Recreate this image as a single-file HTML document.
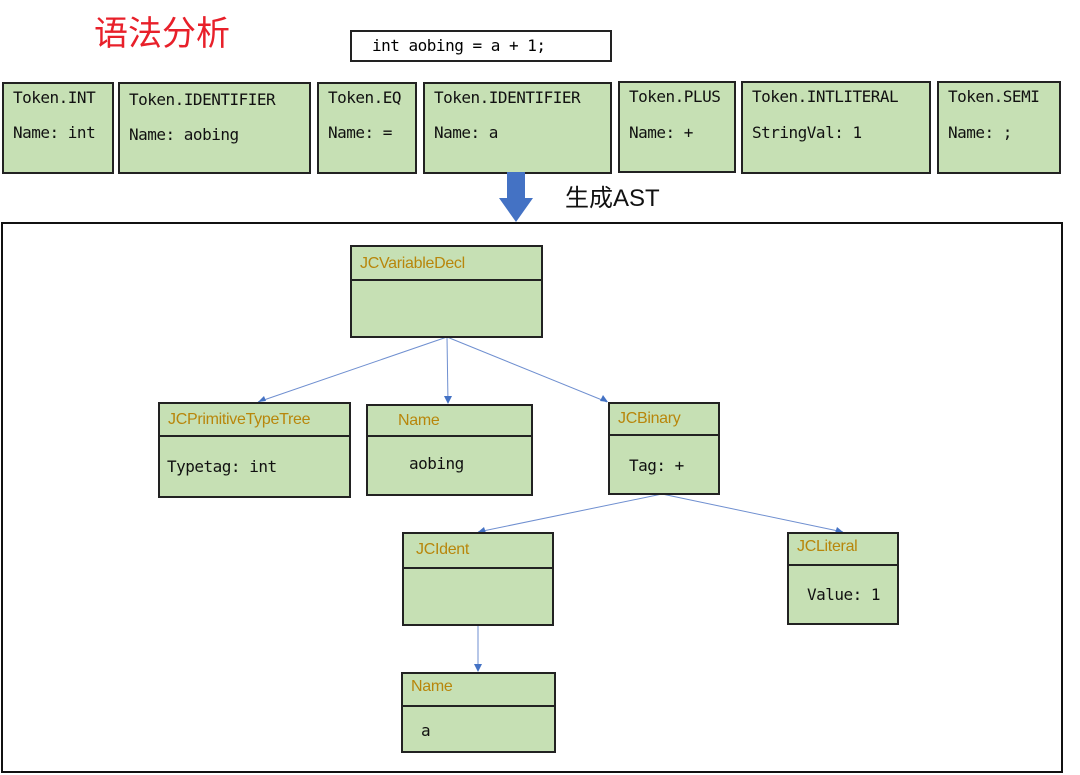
<!DOCTYPE html>
<html><head><meta charset="utf-8"><style>
body{margin:0;width:1080px;height:775px;background:#fff;position:relative;overflow:hidden;font-family:"DejaVu Sans Mono","Liberation Mono",monospace;}
.a{position:absolute;box-sizing:border-box;}
.t{background:#c6e0b4;border:2px solid #222;font-size:16px;color:#111;}
.t span{position:absolute;left:9px;white-space:nowrap;letter-spacing:-0.5px}
.n{background:#c6e0b4;border:2px solid #222;}
.n .h{position:absolute;left:0;right:0;top:0;border-bottom:2px solid #222;color:#b8860b;font-family:"Liberation Sans",sans-serif;font-size:16px;padding-left:8px;box-sizing:border-box;letter-spacing:-0.3px}
.n .b{position:absolute;font-size:16px;color:#111;white-space:nowrap;letter-spacing:-0.5px}
</style></head><body>
<div class="a" style="left:94px;top:6px;font:34px 'Noto Sans CJK SC',sans-serif;color:#e8202a;">语法分析</div>
<div class="a" style="left:350px;top:30px;width:262px;height:32px;border:2px solid #222;font-size:16px;padding:4px 0 0 20px;letter-spacing:-0.5px">int aobing = a + 1;</div>

<div class="a t" style="left:2px;top:82px;width:112px;height:92px"><span style="top:4px">Token.INT</span><span style="top:39px">Name: int</span></div>
<div class="a t" style="left:118px;top:82px;width:193px;height:92px"><span style="top:6px">Token.IDENTIFIER</span><span style="top:41px">Name: aobing</span></div>
<div class="a t" style="left:317px;top:82px;width:100px;height:92px"><span style="top:4px">Token.EQ</span><span style="top:39px">Name: =</span></div>
<div class="a t" style="left:423px;top:82px;width:189px;height:92px"><span style="top:4px">Token.IDENTIFIER</span><span style="top:39px">Name: a</span></div>
<div class="a t" style="left:618px;top:81px;width:118px;height:92px"><span style="top:4px">Token.PLUS</span><span style="top:40px">Name: +</span></div>
<div class="a t" style="left:741px;top:81px;width:190px;height:93px"><span style="top:4px">Token.INTLITERAL</span><span style="top:40px">StringVal: 1</span></div>
<div class="a t" style="left:937px;top:81px;width:124px;height:93px"><span style="top:4px">Token.SEMI</span><span style="top:40px">Name: ;</span></div>

<svg class="a" style="left:0;top:0" width="1080" height="775">
<polygon points="507,172 525,172 525,198 533,198 516,222 499,198 507,198" fill="#4472c4"/>
<g stroke="#6f8fd0" stroke-width="1" fill="none">
<line x1="447" y1="337" x2="258" y2="402"/><line x1="447" y1="337" x2="448" y2="403"/><line x1="447" y1="337" x2="607" y2="402"/>
<line x1="662" y1="494" x2="478" y2="532"/><line x1="662" y1="494" x2="843" y2="532"/><line x1="478" y1="625" x2="478" y2="671"/>
</g>
<g fill="#4472c4">
<polygon points="258,402 264,396 266,401"/><polygon points="448,404 444,396 452,396"/><polygon points="608,402 600,401 603,395"/>
<polygon points="478,532 484,527 486,533"/><polygon points="843,532 835,533 837,527"/><polygon points="478,672 474,664 482,664"/>
</g>
</svg>
<div class="a" style="left:565px;top:178px;font:24px 'Liberation Sans','Noto Sans CJK SC',sans-serif;color:#111">生成AST</div>

<div class="a" style="left:1px;top:222px;width:1062px;height:551px;border:2px solid #111"></div>

<div class="a n" style="left:350px;top:245px;width:193px;height:93px"><div class="h" style="height:34px;padding-top:8px">JCVariableDecl</div></div>
<div class="a n" style="left:158px;top:402px;width:193px;height:96px"><div class="h" style="height:33px;padding-top:7px">JCPrimitiveTypeTree</div><div class="b" style="left:7px;top:53px">Typetag: int</div></div>
<div class="a n" style="left:366px;top:404px;width:167px;height:92px"><div class="h" style="height:31px;padding-top:6px;padding-left:30px">Name</div><div class="b" style="left:41px;top:48px">aobing</div></div>
<div class="a n" style="left:608px;top:402px;width:112px;height:93px"><div class="h" style="height:32px;padding-top:6px">JCBinary</div><div class="b" style="left:19px;top:52px">Tag: +</div></div>
<div class="a n" style="left:402px;top:532px;width:152px;height:94px"><div class="h" style="height:35px;padding-top:7px;padding-left:12px">JCIdent</div></div>
<div class="a n" style="left:787px;top:532px;width:112px;height:93px"><div class="h" style="height:32px;padding-top:4px">JCLiteral</div><div class="b" style="left:18px;top:51px">Value: 1</div></div>
<div class="a n" style="left:401px;top:672px;width:155px;height:81px"><div class="h" style="height:33px;padding-top:4px">Name</div><div class="b" style="left:18px;top:47px">a</div></div>
</body></html>
